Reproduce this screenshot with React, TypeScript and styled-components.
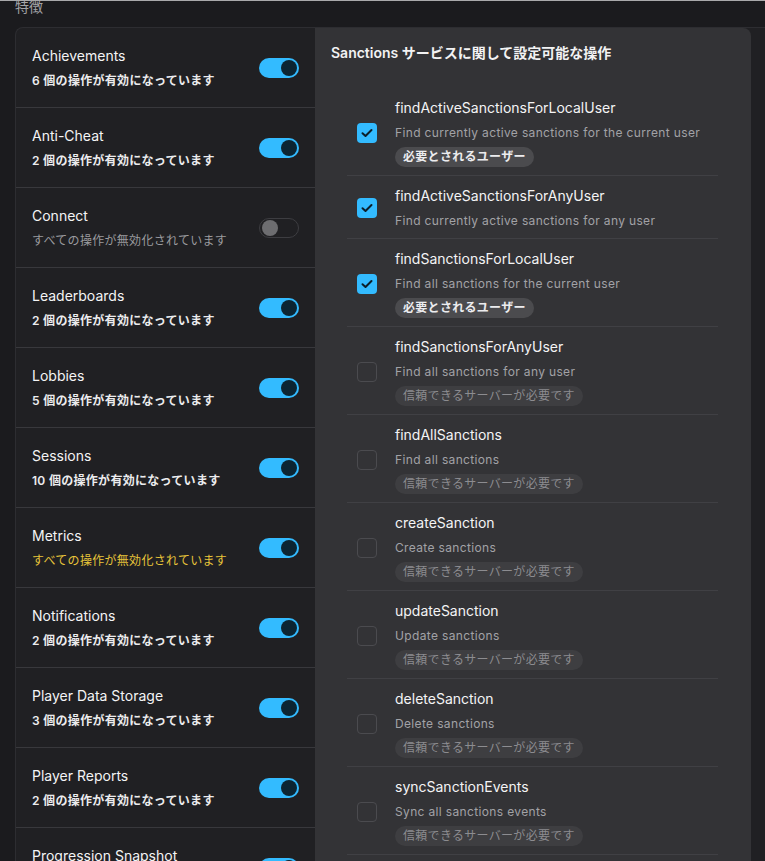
import React from "react"
import styled, { createGlobalStyle } from "styled-components"

const GlobalStyle = createGlobalStyle`
  html, body {
    margin: 0;
    padding: 0;
    background: #1b1b1e;
    overflow: hidden;
  }
  body {
    border-top: 1px solid #a9a9ab;
    font-family: Inter, "Noto Sans CJK JP", sans-serif;
    color: #f2f2f3;
  }
`

const Page = styled.div`
  height: 860px;
  overflow: hidden;
`

const Heading = styled.div`
  margin: -3px 0 0 15px;
  height: 29px;
  font-size: 14px;
  line-height: 18px;
  color: #a3a3a6;
`

const Card = styled.div`
  display: flex;
  margin-left: 15px;
  width: 800px;
  background: #202023;
  border-top: 1px solid #2d2d31;
  border-left: 1px solid #2d2d31;
  border-top-left-radius: 8px;
`

const FeatureList = styled.div`
  width: 299px;
  flex-shrink: 0;
`

const FeatureRow = styled.div`
  height: 79px;
  display: flex;
  align-items: center;
  justify-content: space-between;
  padding: 0 16px 0 16px;
  border-bottom: 1px solid #38383c;
`

const FeatureText = styled.div`
  display: flex;
  flex-direction: column;
  gap: 6px;
`

const FeatureName = styled.div`
  font-size: 14px;
  line-height: 20px;
  color: #f4f4f5;
`

type tone = "on" | "off" | "warn"

const FeatureStatus = styled.div<{ $tone: tone }>`
  font-size: 12px;
  line-height: 18px;
  letter-spacing: 0.3px;
  font-weight: ${p => (p.$tone === "on" ? 600 : 400)};
  color: ${p =>
    p.$tone === "on" ? "#ececee" : p.$tone === "warn" ? "#e8c53a" : "#9b9b9f"};
`

const Toggle = styled.div<{ $on: boolean }>`
  position: relative;
  width: 40px;
  height: 20px;
  border-radius: 10px;
  box-sizing: border-box;
  flex-shrink: 0;
  background: ${p => (p.$on ? "#33bbff" : "#202023")};
  border: ${p => (p.$on ? "none" : "1px solid #3d3d41")};
`

const Knob = styled.span<{ $on: boolean }>`
  position: absolute;
  top: ${p => (p.$on ? "2px" : "1px")};
  left: ${p => (p.$on ? "22px" : "2px")};
  width: 16px;
  height: 16px;
  border-radius: 50%;
  background: ${p => (p.$on ? "#0c2533" : "#6d6d70")};
`

const OpsPanel = styled.div`
  width: 436px;
  flex-shrink: 0;
  background: #333336;
  border-radius: 0 8px 8px 0;
  padding: 15px 0 0 0;
  min-height: 840px;
`

const OpsTitle = styled.div`
  padding-left: 16px;
  font-size: 14px;
  line-height: 20px;
  font-weight: 600;
  color: #f2f2f3;
  margin-bottom: 25px;
`

const OpsList = styled.div`
  margin: 0 33px 0 32px;
`

const OpRow = styled.div`
  display: flex;
  align-items: center;
  gap: 18px;
  padding: 10px 0 8px 10px;
  border-bottom: 1px solid #404044;
`

const Check = styled.div<{ $checked: boolean }>`
  width: 20px;
  height: 20px;
  border-radius: 4px;
  box-sizing: border-box;
  flex-shrink: 0;
  display: flex;
  align-items: center;
  justify-content: center;
  background: ${p => (p.$checked ? "#33bbff" : "transparent")};
  border: ${p => (p.$checked ? "none" : "1px solid #4b4b4f")};
`

const OpText = styled.div`
  display: flex;
  flex-direction: column;
  align-items: flex-start;
`

const OpName = styled.div`
  font-size: 14px;
  line-height: 20px;
  color: #f4f4f5;
`

const OpDesc = styled.div`
  margin-top: 6px;
  font-size: 12px;
  line-height: 18px;
  letter-spacing: 0.35px;
  color: #a2a2a6;
`

const Badge = styled.div<{ $strong: boolean }>`
  margin-top: 5px;
  height: 20px;
  line-height: 20px;
  padding: 0 8px;
  border-radius: 10px;
  font-size: 12px;
  letter-spacing: 0.3px;
  font-weight: ${p => (p.$strong ? 600 : 400)};
  background: ${p => (p.$strong ? "#4b4b4e" : "#3e3e41")};
  color: ${p => (p.$strong ? "#ececee" : "#8c8c90")};
`

const features: { name: string; status: string; tone: tone; on: boolean }[] = [
  { name: "Achievements", status: "6 個の操作が有効になっています", tone: "on", on: true },
  { name: "Anti-Cheat", status: "2 個の操作が有効になっています", tone: "on", on: true },
  { name: "Connect", status: "すべての操作が無効化されています", tone: "off", on: false },
  { name: "Leaderboards", status: "2 個の操作が有効になっています", tone: "on", on: true },
  { name: "Lobbies", status: "5 個の操作が有効になっています", tone: "on", on: true },
  { name: "Sessions", status: "10 個の操作が有効になっています", tone: "on", on: true },
  { name: "Metrics", status: "すべての操作が無効化されています", tone: "warn", on: true },
  { name: "Notifications", status: "2 個の操作が有効になっています", tone: "on", on: true },
  { name: "Player Data Storage", status: "3 個の操作が有効になっています", tone: "on", on: true },
  { name: "Player Reports", status: "2 個の操作が有効になっています", tone: "on", on: true },
  { name: "Progression Snapshot", status: "2 個の操作が有効になっています", tone: "on", on: true },
]

const USER = "必要とされるユーザー"
const SERVER = "信頼できるサーバーが必要です"

const ops: { name: string; desc: string; checked: boolean; badge?: string }[] = [
  { name: "findActiveSanctionsForLocalUser", desc: "Find currently active sanctions for the current user", checked: true, badge: USER },
  { name: "findActiveSanctionsForAnyUser", desc: "Find currently active sanctions for any user", checked: true },
  { name: "findSanctionsForLocalUser", desc: "Find all sanctions for the current user", checked: true, badge: USER },
  { name: "findSanctionsForAnyUser", desc: "Find all sanctions for any user", checked: false, badge: SERVER },
  { name: "findAllSanctions", desc: "Find all sanctions", checked: false, badge: SERVER },
  { name: "createSanction", desc: "Create sanctions", checked: false, badge: SERVER },
  { name: "updateSanction", desc: "Update sanctions", checked: false, badge: SERVER },
  { name: "deleteSanction", desc: "Delete sanctions", checked: false, badge: SERVER },
  { name: "syncSanctionEvents", desc: "Sync all sanctions events", checked: false, badge: SERVER },
]

function CheckMark() {
  return (
    <svg width="12" height="10" viewBox="0 0 12 10">
      <path d="M1.5 5.2 L4.5 8 L10.5 2" fill="none" stroke="#0c1f2a" strokeWidth="2" strokeLinecap="round" strokeLinejoin="round" />
    </svg>
  )
}

export default function App() {
  return (
    <Page>
      <GlobalStyle />
      <Heading>特徴</Heading>
      <Card>
        <FeatureList>
          {features.map(f => (
            <FeatureRow key={f.name}>
              <FeatureText>
                <FeatureName>{f.name}</FeatureName>
                <FeatureStatus $tone={f.tone}>{f.status}</FeatureStatus>
              </FeatureText>
              <Toggle $on={f.on}>
                <Knob $on={f.on} />
              </Toggle>
            </FeatureRow>
          ))}
        </FeatureList>
        <OpsPanel>
          <OpsTitle>Sanctions サービスに関して設定可能な操作</OpsTitle>
          <OpsList>
            {ops.map(o => (
              <OpRow key={o.name}>
                <Check $checked={o.checked}>{o.checked && <CheckMark />}</Check>
                <OpText>
                  <OpName>{o.name}</OpName>
                  <OpDesc>{o.desc}</OpDesc>
                  {o.badge && <Badge $strong={o.badge === USER}>{o.badge}</Badge>}
                </OpText>
              </OpRow>
            ))}
          </OpsList>
        </OpsPanel>
      </Card>
    </Page>
  )
}
